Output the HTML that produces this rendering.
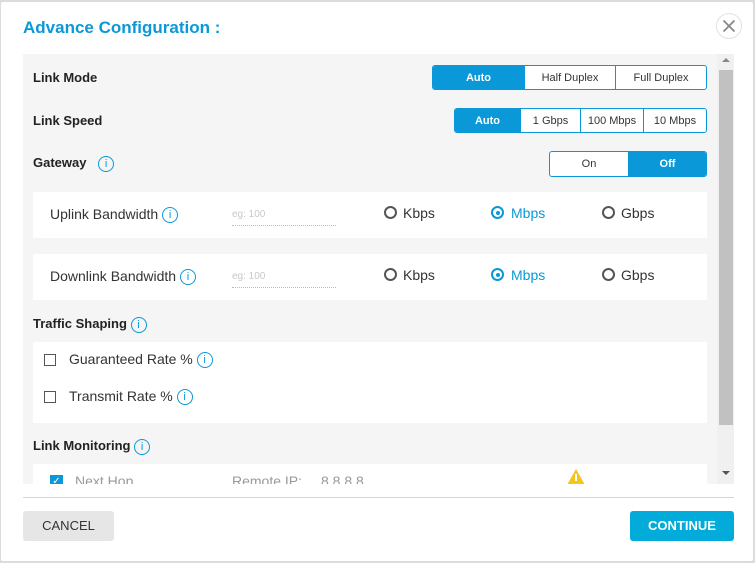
<!DOCTYPE html>
<html><head><meta charset="utf-8"><style>
*{box-sizing:border-box;margin:0;padding:0}
body{width:755px;height:563px;background:#dcdcdc;font-family:"Liberation Sans",sans-serif;position:relative;overflow:hidden;color:#222}
.a{position:absolute}
.modal{left:1px;top:2px;width:752px;height:559px;background:#fff;border-radius:2px}
.lbl{font-size:13px;font-weight:bold;color:#222}
.seg{display:flex;border:1px solid #0a98d8;border-radius:3px;overflow:hidden;background:#fff}
.seg div{display:flex;align-items:center;justify-content:center;font-size:11px;color:#333;border-left:1px solid #0a98d8}
.seg div:first-child{border-left:none}
.seg .on{background:#0a98d8;color:#fff;font-weight:bold}
.info{display:inline-block;width:16px;height:16px;border:1.3px solid #0a98d8;border-radius:50%;color:#0a98d8;font-size:11px;line-height:14px;text-align:center;font-weight:normal;vertical-align:middle}
.box{background:#fff}
.rad{width:13px;height:13px;border:2px solid #555;border-radius:50%}
.rad.s{border-color:#0a98d8}
.rad.s::after{content:"";position:absolute;left:2.5px;top:2.5px;width:4px;height:4px;border-radius:50%;background:#0a98d8}
.rt{font-size:14px;color:#333}
.cb{width:12px;height:12px;border:1px solid #555;background:#fff}
.txt{font-size:14px;color:#333}
.ph{font-size:10px;color:#c8c8c8}
.ul{height:0;border-bottom:1px dotted #bbb}
</style></head><body>
<div class="a modal"></div>
<div class="a" style="left:23px;top:18px;font-size:17px;color:#0a98d8;font-weight:bold">Advance Configuration :</div>
<div class="a" style="left:716px;top:13px;width:26px;height:26px;border:1px solid #e2e2e2;border-radius:50%">
<svg width="24" height="24" viewBox="0 0 24 24" style="position:absolute;left:0;top:0"><path d="M6.5 6.5L17.5 17.5M17.5 6.5L6.5 17.5" stroke="#888" stroke-width="1.8" fill="none"/></svg></div>

<div class="a" style="left:23px;top:54px;width:694px;height:430px;background:#f5f5f5"></div>
<div class="a" style="left:717px;top:54px;width:17px;height:430px;background:#f0f0f0"></div>
<div class="a" style="left:719px;top:70px;width:14px;height:355px;background:#c1c1c1"></div>
<div class="a" style="left:722px;top:58px;width:0;height:0;border:4px solid transparent;border-bottom:4px solid #888;border-top:none"></div>
<div class="a" style="left:722px;top:471px;width:0;height:0;border:4px solid transparent;border-top:4px solid #555;border-bottom:none"></div>

<div class="a lbl" style="left:33px;top:70px">Link Mode</div>
<div class="a seg" style="left:432px;top:65px;width:275px;height:25px"><div class="on" style="width:91px">Auto</div><div style="width:91px">Half Duplex</div><div style="flex:1">Full Duplex</div></div>
<div class="a lbl" style="left:33px;top:113px">Link Speed</div>
<div class="a seg" style="left:454px;top:108px;width:253px;height:25px"><div class="on" style="width:65px">Auto</div><div style="width:60px">1 Gbps</div><div style="width:63px">100 Mbps</div><div style="flex:1">10 Mbps</div></div>
<div class="a lbl" style="left:33px;top:155px">Gateway <span class="info" style="margin-left:8px">i</span></div>
<div class="a seg" style="left:549px;top:151px;width:158px;height:26px"><div style="width:78px">On</div><div class="on" style="flex:1">Off</div></div>

<div class="a box" style="left:33px;top:192px;width:674px;height:46px"></div>
<div class="a txt" style="left:50px;top:206px">Uplink Bandwidth <span class="info">i</span></div>
<div class="a ph" style="left:232px;top:209px">eg: 100</div>
<div class="a ul" style="left:232px;top:225px;width:104px"></div>
<div class="a rad" style="left:384px;top:206px"></div><div class="a rt" style="left:403px;top:205px">Kbps</div>
<div class="a rad s" style="left:491px;top:206px"></div><div class="a rt" style="left:511px;top:205px;color:#0a98d8">Mbps</div>
<div class="a rad" style="left:602px;top:206px"></div><div class="a rt" style="left:621px;top:205px">Gbps</div>

<div class="a box" style="left:33px;top:254px;width:674px;height:46px"></div>
<div class="a txt" style="left:50px;top:268px">Downlink Bandwidth <span class="info">i</span></div>
<div class="a ph" style="left:232px;top:271px">eg: 100</div>
<div class="a ul" style="left:232px;top:287px;width:104px"></div>
<div class="a rad" style="left:384px;top:268px"></div><div class="a rt" style="left:403px;top:267px">Kbps</div>
<div class="a rad s" style="left:491px;top:268px"></div><div class="a rt" style="left:511px;top:267px;color:#0a98d8">Mbps</div>
<div class="a rad" style="left:602px;top:268px"></div><div class="a rt" style="left:621px;top:267px">Gbps</div>

<div class="a lbl" style="left:33px;top:316px">Traffic Shaping <span class="info">i</span></div>
<div class="a box" style="left:33px;top:342px;width:674px;height:81px"></div>
<div class="a cb" style="left:44px;top:354px"></div>
<div class="a txt" style="left:69px;top:351px">Guaranteed Rate % <span class="info">i</span></div>
<div class="a cb" style="left:44px;top:391px"></div>
<div class="a txt" style="left:69px;top:388px">Transmit Rate % <span class="info">i</span></div>

<div class="a lbl" style="left:33px;top:438px">Link Monitoring <span class="info">i</span></div>
<div class="a box" style="left:33px;top:464px;width:674px;height:20px;overflow:hidden">
 <div class="a" style="left:17px;top:11px;width:13px;height:13px;background:#0a98d8;color:#fff;font-size:10px;line-height:13px;text-align:center">✓</div>
 <div class="a txt" style="left:42px;top:9px;color:#999">Next Hop</div>
 <div class="a txt" style="left:199px;top:9px;color:#999">Remote IP:</div>
 <div class="a txt" style="left:288px;top:9px;color:#999">8.8.8.8</div>
 <svg class="a" style="left:534px;top:5px" width="18" height="16" viewBox="0 0 18 16"><path d="M9 0L18 16H0Z" fill="#f5c518"/><rect x="8" y="5" width="2" height="7" fill="#fff"/></svg>
</div>

<div class="a" style="left:23px;top:497px;width:711px;height:1px;background:#d5d5d5"></div>
<div class="a" style="left:23px;top:511px;width:91px;height:30px;background:#e6e6e6;border-radius:3px;font-size:13px;line-height:30px;text-align:center;color:#333">CANCEL</div>
<div class="a" style="left:630px;top:511px;width:104px;height:30px;background:#02abd9;border-radius:3px;font-size:13px;line-height:30px;text-align:center;color:#fff;font-weight:bold">CONTINUE</div>
</body></html>
